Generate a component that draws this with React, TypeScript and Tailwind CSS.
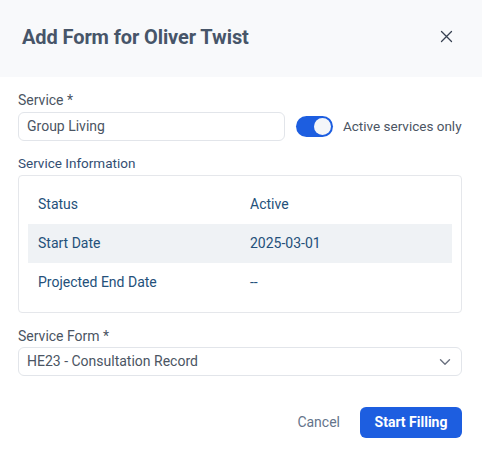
import React from "react";

export default function App() {
  return (
    <div className="w-[482px] h-[457px] bg-white overflow-hidden" style={{ fontFamily: "Roboto, 'Liberation Sans', sans-serif" }}>
      <div className="h-[77px] bg-[#f8f9fb] flex items-center justify-between pl-[22px] pr-[29px] pb-[3px]">
        <h1 className="text-[20px] font-bold text-[#475569] tracking-[-0.1px]">Add Form for Oliver Twist</h1>
        <svg width="13" height="13" viewBox="0 0 13 13" className="text-[#374151] mb-[2px]">
          <path d="M1.5 1.5L11.5 11.5M11.5 1.5L1.5 11.5" stroke="currentColor" strokeWidth="1.3" strokeLinecap="round" />
        </svg>
      </div>
      <div className="pl-[18px] pr-[20px] pt-[14px]">
        <div className="text-[14px] text-[#4b5563] leading-[18px]">Service *</div>
        <div className="flex items-center mt-[3px] h-[29px]">
          <div className="shrink-0 w-[267px] h-[29px] border border-[#e2e5ea] rounded-[6px] flex items-center px-[8px] text-[14px] text-[#4b5563]">Group Living</div>
          <div className="shrink-0 ml-[11px] w-[37px] h-[21px] rounded-full bg-[#1d5ee0] flex items-center justify-end pr-[2px]">
            <div className="w-[17px] h-[17px] rounded-full bg-[#f4f6f9]" />
          </div>
          <div className="ml-[10px] text-[13.5px] text-[#4b5563] whitespace-nowrap">Active services only</div>
        </div>
        <div className="mt-[13px] text-[13.5px] text-[#334e72] leading-[18px]">Service Information</div>
        <div className="mt-[3px] border border-[#e5e7eb] rounded-[4px] px-[9px] pt-[9px] h-[138px]">
          <div className="flex items-center h-[39px] px-[10px] text-[14px] text-[#24507a]">
            <div className="w-[212px]">Status</div>
            <div>Active</div>
          </div>
          <div className="flex items-center h-[39px] px-[10px] text-[14px] text-[#24507a] bg-[#eff2f5]">
            <div className="w-[212px]">Start Date</div>
            <div>2025-03-01</div>
          </div>
          <div className="flex items-center h-[39px] px-[10px] text-[14px] text-[#24507a]">
            <div className="w-[212px]">Projected End Date</div>
            <div>--</div>
          </div>
        </div>
        <div className="mt-[14px] text-[14px] text-[#4b5563] leading-[18px]">Service Form *</div>
        <div className="mt-[2px] h-[29px] border border-[#e2e5ea] rounded-[6px] flex items-center justify-between pl-[8px] pr-[10px] text-[14px] text-[#4b5563]">
          <span>HE23 - Consultation Record</span>
          <svg width="12" height="8" viewBox="0 0 12 8">
            <path d="M1.5 1.8L6 6.2L10.5 1.8" fill="none" stroke="#6b7280" strokeWidth="1.4" strokeLinecap="round" strokeLinejoin="round" />
          </svg>
        </div>
        <div className="mt-[31px] flex justify-end items-center">
          <span className="text-[14px] text-[#64748b] mr-[20px]">Cancel</span>
          <button className="w-[102px] h-[31px] rounded-[6px] bg-[#1d5ee0] text-white text-[14px] font-bold">Start Filling</button>
        </div>
      </div>
    </div>
  );
}
